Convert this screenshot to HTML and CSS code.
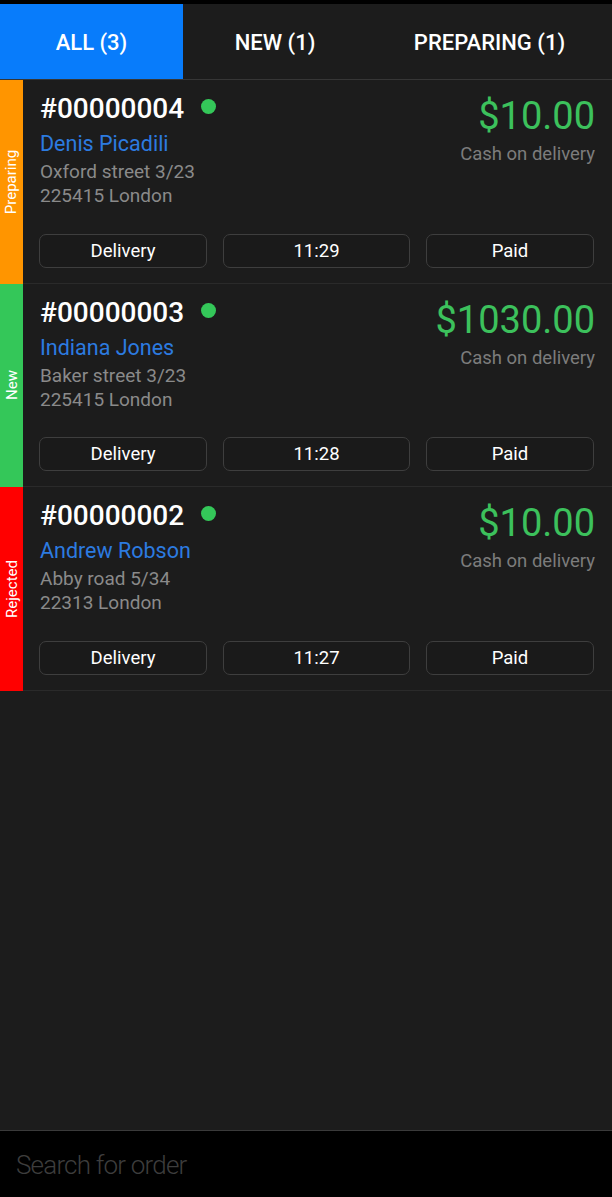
FILE: index.html
```html
<!DOCTYPE html>
<html lang="en">
<head>
<meta charset="utf-8">
<title>Orders</title>
<link rel="stylesheet" href="styles.css">
</head>
<body>
<div class="app">
  <div class="statusbar"></div>
  <nav class="tabs">
    <div class="tab tab-all active">ALL (3)</div>
    <div class="tab tab-new">NEW (1)</div>
    <div class="tab tab-prep">PREPARING (1)</div>
  </nav>
  <main class="list">
    <div class="card">
      <div class="strip strip-preparing"><span class="strip-label">Preparing</span></div>
      <div class="card-body">
        <div class="top">
          <div class="info">
            <div class="order-row"><span class="order-no">#00000004</span><span class="dot"></span></div>
            <div class="name">Denis Picadili</div>
            <div class="addr">Oxford street 3/23</div>
            <div class="addr">225415 London</div>
          </div>
          <div class="pay">
            <div class="price">$10.00</div>
            <div class="method">Cash on delivery</div>
          </div>
        </div>
        <div class="buttons">
          <div class="btn">Delivery</div>
          <div class="btn">11:29</div>
          <div class="btn">Paid</div>
        </div>
      </div>
    </div>
    <div class="card">
      <div class="strip strip-new"><span class="strip-label">New</span></div>
      <div class="card-body">
        <div class="top">
          <div class="info">
            <div class="order-row"><span class="order-no">#00000003</span><span class="dot"></span></div>
            <div class="name">Indiana Jones</div>
            <div class="addr">Baker street 3/23</div>
            <div class="addr">225415 London</div>
          </div>
          <div class="pay">
            <div class="price">$1030.00</div>
            <div class="method">Cash on delivery</div>
          </div>
        </div>
        <div class="buttons">
          <div class="btn">Delivery</div>
          <div class="btn">11:28</div>
          <div class="btn">Paid</div>
        </div>
      </div>
    </div>
    <div class="card">
      <div class="strip strip-rejected"><span class="strip-label">Rejected</span></div>
      <div class="card-body">
        <div class="top">
          <div class="info">
            <div class="order-row"><span class="order-no">#00000002</span><span class="dot"></span></div>
            <div class="name">Andrew Robson</div>
            <div class="addr">Abby road 5/34</div>
            <div class="addr">22313 London</div>
          </div>
          <div class="pay">
            <div class="price">$10.00</div>
            <div class="method">Cash on delivery</div>
          </div>
        </div>
        <div class="buttons">
          <div class="btn">Delivery</div>
          <div class="btn">11:27</div>
          <div class="btn">Paid</div>
        </div>
      </div>
    </div>
  </main>
  <div class="search">
    <input class="search-input" type="text" placeholder="Search for order">
  </div>
</div>
</body>
</html>
```

FILE: styles.css
```css
* { box-sizing: border-box; }
html, body { margin: 0; padding: 0; }
body {
  background: #1c1c1c;
  font-family: Roboto, "Noto Sans", "Liberation Sans", sans-serif;
  color: #fff;
}
.app {
  display: flex;
  flex-direction: column;
  height: 1197px;
  overflow: hidden;
}
.statusbar {
  height: 4px;
  background: #000;
  flex: none;
}
.tabs {
  display: flex;
  height: 76px;
  flex: none;
  border-bottom: 1px solid #363636;
  background: #1c1c1c;
}
.tab {
  display: flex;
  align-items: center;
  justify-content: center;
  font-size: 22px;
  font-weight: 500;
  color: #fff;
  padding-top: 1px;
}
.tab-all { width: 183px; }
.tab-new { width: 184px; }
.tab-prep { flex: 1; }
.tab.active { background: #087cfb; }

.list {
  flex: 1;
  background: #1c1c1c;
}
.card {
  display: flex;
  height: 203.5px;
}
.strip {
  width: 23px;
  flex: none;
  display: flex;
  align-items: center;
  justify-content: center;
  overflow: hidden;
}
.strip-preparing { background: #ff9500; }
.strip-new { background: #34c759; }
.strip-rejected { background: #ff0000; }
.strip-label {
  transform: rotate(-90deg);
  white-space: nowrap;
  font-size: 15px;
  color: #fff;
  line-height: 16px;
}
.card-body {
  flex: 1;
  display: flex;
  flex-direction: column;
  padding: 11px 17px 15px 17px;
  border-bottom: 1px solid #2a2a2a;
}
.top {
  display: flex;
  justify-content: space-between;
}
.order-row {
  display: flex;
  align-items: center;
  height: 36px;
}
.order-no {
  font-size: 28px;
  font-weight: 500;
  line-height: 36px;
  color: #fff;
}
.dot {
  width: 15px;
  height: 15px;
  border-radius: 50%;
  background: #34c759;
  margin-left: 17px;
  margin-top: -5px;
}
.name {
  margin-top: 4px;
  margin-bottom: 3px;
  font-size: 21.5px;
  line-height: 26px;
  color: #2c7be0;
}
.addr {
  font-size: 19px;
  line-height: 24px;
  color: #8a8a8a;
}
.pay {
  display: flex;
  flex-direction: column;
  align-items: flex-end;
}
.price {
  margin-top: 5px;
  font-size: 38px;
  line-height: 40px;
  color: #3cc15c;
}
.method {
  margin-top: 6px;
  font-size: 18.5px;
  line-height: 24px;
  color: #7c7c7c;
}
.buttons {
  margin-top: auto;
  display: grid;
  grid-template-columns: 168px 187px 168px;
  column-gap: 16px;
  margin-left: -1px;
}
.btn {
  height: 34px;
  border: 1px solid #3e3e3e;
  border-radius: 7px;
  background: #1a1a1a;
  display: flex;
  align-items: center;
  justify-content: center;
  font-size: 18.5px;
  color: #fff;
}
.search {
  height: 67px;
  flex: none;
  background: #000;
  border-top: 1px solid #3a3a3a;
  display: flex;
  align-items: center;
  padding: 0 16px;
}
.search-input {
  width: 100%;
  background: transparent;
  border: none;
  outline: none;
  font-family: Roboto, "Noto Sans", "Liberation Sans", sans-serif;
  font-size: 26px;
  font-weight: 300;
  letter-spacing: -0.8px;
  color: #fff;
  padding: 0;
  margin-top: 2px;
}
.search-input::placeholder {
  color: #3d3d3d;
}
```
